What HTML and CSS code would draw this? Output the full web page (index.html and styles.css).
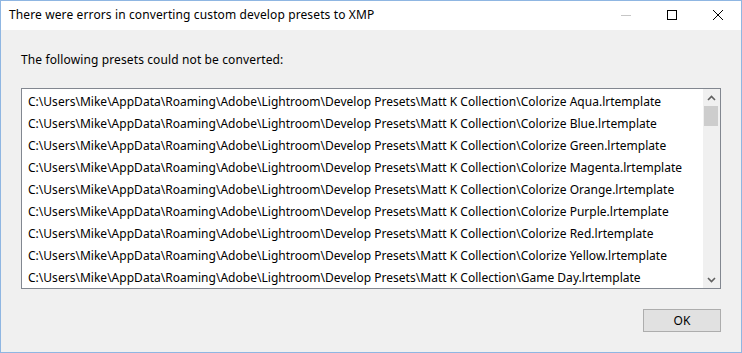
FILE: index.html
```html
<!DOCTYPE html>
<html lang="en">
<head>
    <meta charset="UTF-8">
    <title>There were errors in converting custom develop presets to XMP</title>
    <link rel="stylesheet" href="styles.css">
</head>
<body>
    <div class="window">
        <div class="title-bar">
            <div class="title">There were errors in converting custom develop presets to XMP</div>
            <div class="caption-buttons">
                <div class="caption-button">
                    <svg width="10" height="10" viewBox="0 0 10 10"><path d="M0 5.5H10" stroke="#c6c6c6" stroke-width="1"/></svg>
                </div>
                <div class="caption-button">
                    <svg width="10" height="10" viewBox="0 0 10 10"><rect x="0.5" y="0.5" width="9" height="9" fill="none" stroke="#000" stroke-width="1"/></svg>
                </div>
                <div class="caption-button">
                    <svg width="10" height="10" viewBox="0 0 10 10"><path d="M0 0L10 10M10 0L0 10" stroke="#000" stroke-width="1"/></svg>
                </div>
            </div>
        </div>
        <div class="content">
            <p class="message">The following presets could not be converted:</p>
            <div class="list-box">
                <div class="list-items">
                    <div class="list-item">C:\Users\Mike\AppData\Roaming\Adobe\Lightroom\Develop Presets\Matt K Collection\Colorize Aqua.lrtemplate</div>
                    <div class="list-item">C:\Users\Mike\AppData\Roaming\Adobe\Lightroom\Develop Presets\Matt K Collection\Colorize Blue.lrtemplate</div>
                    <div class="list-item">C:\Users\Mike\AppData\Roaming\Adobe\Lightroom\Develop Presets\Matt K Collection\Colorize Green.lrtemplate</div>
                    <div class="list-item">C:\Users\Mike\AppData\Roaming\Adobe\Lightroom\Develop Presets\Matt K Collection\Colorize Magenta.lrtemplate</div>
                    <div class="list-item">C:\Users\Mike\AppData\Roaming\Adobe\Lightroom\Develop Presets\Matt K Collection\Colorize Orange.lrtemplate</div>
                    <div class="list-item">C:\Users\Mike\AppData\Roaming\Adobe\Lightroom\Develop Presets\Matt K Collection\Colorize Purple.lrtemplate</div>
                    <div class="list-item">C:\Users\Mike\AppData\Roaming\Adobe\Lightroom\Develop Presets\Matt K Collection\Colorize Red.lrtemplate</div>
                    <div class="list-item">C:\Users\Mike\AppData\Roaming\Adobe\Lightroom\Develop Presets\Matt K Collection\Colorize Yellow.lrtemplate</div>
                    <div class="list-item">C:\Users\Mike\AppData\Roaming\Adobe\Lightroom\Develop Presets\Matt K Collection\Game Day.lrtemplate</div>
                </div>
                <div class="scrollbar">
                    <div class="scroll-arrow">
                        <svg width="9" height="6" viewBox="0 0 9 6"><path d="M1 5L4.5 1.5L8 5" fill="none" stroke="#606060" stroke-width="1.6"/></svg>
                    </div>
                    <div class="scroll-track">
                        <div class="scroll-thumb"></div>
                    </div>
                    <div class="scroll-arrow">
                        <svg width="9" height="6" viewBox="0 0 9 6"><path d="M1 1L4.5 4.5L8 1" fill="none" stroke="#606060" stroke-width="1.6"/></svg>
                    </div>
                </div>
            </div>
            <div class="button-row">
                <button class="ok-button">OK</button>
            </div>
        </div>
    </div>
</body>
</html>
```
FILE: styles.css
```css
body {
    margin: 0;
    font-family: "Noto Sans", "Open Sans", sans-serif;
    font-size: 12px;
    letter-spacing: 0.02px;
    color: #000;
    background-color: #f0f0f0;
}
.window {
    width: 742px;
    height: 353px;
    box-sizing: border-box;
    border: 1px solid #8fb6e2;
    display: flex;
    flex-direction: column;
    background-color: #f0f0f0;
}
.title-bar {
    height: 29px;
    background-color: #fff;
    display: flex;
    align-items: center;
    justify-content: space-between;
    padding-left: 8px;
}
.title {
    padding-bottom: 2px;
    letter-spacing: 0.12px;
}
.caption-buttons {
    display: flex;
    height: 100%;
}
.caption-button {
    width: 46px;
    display: flex;
    align-items: center;
    justify-content: center;
    padding-bottom: 2px;
}
.caption-button svg {
    display: block;
}
.content {
    flex: 1;
    padding: 0 20px 0 20px;
    display: flex;
    flex-direction: column;
}
.message {
    margin: 20px 0 0 0;
    height: 20px;
    line-height: 20px;
    letter-spacing: 0.12px;
}
.list-box {
    margin-top: 18px;
    height: 201px;
    box-sizing: border-box;
    border: 1px solid #828790;
    background-color: #fff;
    display: flex;
    overflow: hidden;
}
.list-items {
    flex: 1;
    padding: 2px 0 0 6px;
    overflow: hidden;
}
.list-item {
    height: 22px;
    line-height: 22px;
    white-space: nowrap;
}
.scrollbar {
    width: 17px;
    background-color: #f0f0f0;
    display: flex;
    flex-direction: column;
}
.scroll-arrow {
    height: 17px;
    display: flex;
    align-items: center;
    justify-content: center;
}
.scroll-arrow svg {
    display: block;
}
.scroll-track {
    flex: 1;
    padding: 0 2px 0 1px;
}
.scroll-thumb {
    height: 20px;
    background-color: #cdcdcd;
}
.button-row {
    display: flex;
    justify-content: flex-end;
    margin-top: 20px;
}
.ok-button {
    width: 78px;
    height: 23px;
    font-family: inherit;
    font-size: 12px;
    background-color: #e1e1e1;
    border: 1px solid #adadad;
    padding: 0;
}
```
